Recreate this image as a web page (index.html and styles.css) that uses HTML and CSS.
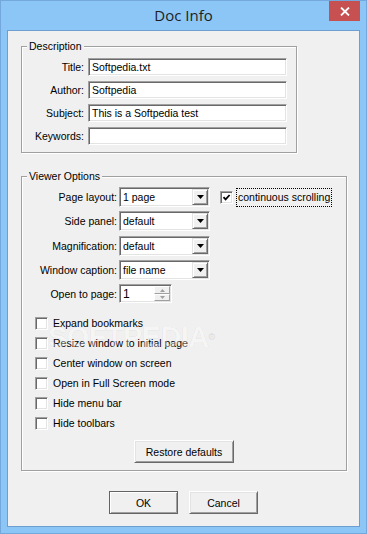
FILE: index.html
```html
<!DOCTYPE html>
<html>
<head>
<meta charset="utf-8">
<link rel="stylesheet" href="styles.css">
</head>
<body>
<div class="window">
  <div class="titlebar">
    <div></div>
    <div class="title">Doc Info</div>
    <div class="close">
      <svg width="10" height="9" viewBox="0 0 10 9"><path d="M1 0.5 L9 8.5 M9 0.5 L1 8.5" stroke="#fff" stroke-width="1.8" fill="none"/></svg>
    </div>
  </div>
  <div class="client">
    <div class="group desc">
      <div class="legend">Description</div>
      <div class="form">
        <label>Title:</label><div class="edit">Softpedia.txt</div>
        <label>Author:</label><div class="edit">Softpedia</div>
        <label>Subject:</label><div class="edit">This is a Softpedia test</div>
        <label>Keywords:</label><div class="edit"></div>
      </div>
    </div>

    <div class="group viewer">
      <div class="legend">Viewer Options</div>
      <div class="opts">
        <label>Page layout:</label>
        <div class="combo"><span class="ctext">1 page</span><span class="drop"><svg width="7" height="4" viewBox="0 0 7 4"><polygon points="0,0 7,0 3.5,4" fill="#000"/></svg></span></div>
        <div class="inline-check">
          <span class="cb"><svg width="9" height="9" viewBox="0 0 9 9"><path d="M1.5 4.2 L3.6 6.4 L7.6 2" stroke="#000" stroke-width="1.8" fill="none"/></svg></span>
          <span class="focus">continuous scrolling</span>
        </div>

        <label>Side panel:</label>
        <div class="combo"><span class="ctext">default</span><span class="drop"><svg width="7" height="4" viewBox="0 0 7 4"><polygon points="0,0 7,0 3.5,4" fill="#000"/></svg></span></div>
        <div></div>

        <label>Magnification:</label>
        <div class="combo"><span class="ctext">default</span><span class="drop"><svg width="7" height="4" viewBox="0 0 7 4"><polygon points="0,0 7,0 3.5,4" fill="#000"/></svg></span></div>
        <div></div>

        <label>Window caption:</label>
        <div class="combo"><span class="ctext">file name</span><span class="drop"><svg width="7" height="4" viewBox="0 0 7 4"><polygon points="0,0 7,0 3.5,4" fill="#000"/></svg></span></div>
        <div></div>

        <label>Open to page:</label>
        <div class="spin">
          <span class="stext">1</span>
          <span class="spin-btns">
            <span class="sbtn"><svg width="5" height="3" viewBox="0 0 5 3"><polygon points="2.5,0 5,3 0,3" fill="#a0a0a0"/></svg></span>
            <span class="sbtn"><svg width="5" height="3" viewBox="0 0 5 3"><polygon points="0,0 5,0 2.5,3" fill="#a0a0a0"/></svg></span>
          </span>
        </div>
        <div></div>
      </div>

      <div class="checks">
        <div class="check-row"><span class="cb"></span><span>Expand bookmarks</span></div>
        <div class="check-row"><span class="cb"></span><span>Resize window to initial page</span></div>
        <div class="check-row"><span class="cb"></span><span>Center window on screen</span></div>
        <div class="check-row"><span class="cb"></span><span>Open in Full Screen mode</span></div>
        <div class="check-row"><span class="cb"></span><span>Hide menu bar</span></div>
        <div class="check-row"><span class="cb"></span><span>Hide toolbars</span></div>
      </div>

      <div class="restore-row"><div class="btn restore">Restore defaults</div></div>

      <div class="watermark">SOFTPEDIA<sup>®</sup></div>
    </div>

    <div class="dlg">
      <div class="btn default">OK</div>
      <div class="btn">Cancel</div>
    </div>
  </div>
</div>
</body>
</html>
```

FILE: styles.css
```css
* { box-sizing: border-box; }
html, body { margin: 0; padding: 0; }
body {
  width: 367px;
  height: 534px;
  overflow: hidden;
  background: #8cc6f6;
  font-family: "Liberation Sans", Arial, sans-serif;
  font-size: 10.5px;
  color: #000;
}
.window {
  width: 367px;
  height: 534px;
  border: 1px solid #74a8dc;
  background: #8cc6f6;
  display: flex;
  flex-direction: column;
}
.titlebar {
  height: 29px;
  flex: none;
  display: grid;
  grid-template-columns: 1fr auto 1fr;
  padding: 0 6px;
}
.title {
  font-family: "Open Sans", "Noto Sans", sans-serif;
  font-size: 15px;
  line-height: 29px;
  color: #1e1e1e;
}
.close {
  justify-self: end;
  align-self: start;
  width: 31px;
  height: 20px;
  background: #c75050;
  display: flex;
  align-items: center;
  justify-content: center;
}
.close svg { display: block; }
.client {
  margin: 0 6px;
  height: 497px;
  flex: none;
  border: 1px solid #6c9ed0;
  background: #f0f0f0;
  padding: 15px 13px 0 13px;
}
.group {
  border: 1px solid #a0a0a0;
  box-shadow: inset 1px 1px 0 #fff, 1px 1px 0 #fff;
}
.legend {
  width: fit-content;
  margin: -7px 0 0 5px;
  padding: 0 2px;
  background: #f0f0f0;
  line-height: 13px;
  height: 13px;
}
.desc {
  width: 276px;
  padding: 0 0 7px;
}
.form {
  display: grid;
  grid-template-columns: 62px 199px;
  grid-auto-rows: 18px;
  column-gap: 4px;
  row-gap: 5px;
  margin-top: 5px;
}
.form label, .opts label {
  text-align: right;
  align-self: center;
  white-space: nowrap;
}
.edit {
  height: 18px;
  background: #fff;
  border: 1px solid;
  border-color: #a0a0a0 #fff #fff #a0a0a0;
  box-shadow: inset 1px 1px 0 #696969, inset -1px -1px 0 #e3e3e3;
  padding: 0 3px;
  line-height: 16px;
  white-space: nowrap;
}
.viewer {
  width: 326px;
  margin-top: 23px;
  padding: 0 0 7px;
  position: relative;
}
.opts {
  display: grid;
  grid-template-columns: 95px 91px auto;
  grid-template-rows: 20px 20px 20px 20px 19px;
  column-gap: 2px;
  row-gap: 4.33px;
  margin-top: 4px;
  align-items: center;
}
.combo {
  height: 20px;
  background: #fff;
  border: 1px solid;
  border-color: #a0a0a0 #fff #fff #a0a0a0;
  box-shadow: inset 1px 1px 0 #696969, inset -1px -1px 0 #e3e3e3;
  padding: 1px;
  display: flex;
  align-items: center;
}
.ctext {
  flex: 1;
  padding-left: 2px;
  white-space: nowrap;
}
.drop {
  width: 16px;
  height: 16px;
  flex: none;
  background: #f0f0f0;
  border: 1px solid;
  border-color: #e3e3e3 #696969 #696969 #e3e3e3;
  box-shadow: inset 1px 1px 0 #fff, inset -1px -1px 0 #a0a0a0;
  display: flex;
  align-items: center;
  justify-content: center;
}
.drop svg { display: block; }
.inline-check {
  margin-left: 8px;
  display: flex;
  align-items: center;
  gap: 3px;
}
.cb {
  width: 13px;
  height: 13px;
  flex: none;
  background: #fff;
  border: 1px solid;
  border-color: #a0a0a0 #fff #fff #a0a0a0;
  box-shadow: inset 1px 1px 0 #696969, inset -1px -1px 0 #e3e3e3;
  display: flex;
  align-items: center;
  justify-content: center;
}
.cb svg { display: block; }
.focus {
  border: 1px dotted #000;
  padding: 2px 1px 2px;
  line-height: 13px;
  white-space: nowrap;
}
.spin {
  width: 53px;
  height: 19px;
  background: #fff;
  border: 1px solid;
  border-color: #a0a0a0 #fff #fff #a0a0a0;
  box-shadow: inset 1px 1px 0 #696969, inset -1px -1px 0 #e3e3e3;
  padding: 1px;
  display: flex;
  align-items: center;
}
.stext {
  flex: 1;
  padding-left: 2px;
  font-size: 12px;
}
.spin-btns {
  width: 16px;
  height: 15px;
  display: flex;
  flex-direction: column;
}
.sbtn {
  flex: 1;
  background: #f0f0f0;
  border: 1px solid;
  border-color: #fff #a0a0a0 #a0a0a0 #fff;
  display: flex;
  align-items: center;
  justify-content: center;
}
.sbtn svg { display: block; }
.checks {
  margin-top: 10px;
  padding-left: 13px;
  display: flex;
  flex-direction: column;
}
.check-row {
  height: 20px;
  display: flex;
  align-items: center;
  gap: 5px;
  white-space: nowrap;
}
.restore-row {
  margin-top: 7px;
  display: flex;
  justify-content: center;
}
.btn {
  height: 23px;
  width: 69px;
  background: #f0f0f0;
  border: 1px solid;
  border-color: #fff #696969 #696969 #fff;
  box-shadow: inset 1px 1px 0 #e3e3e3, inset -1px -1px 0 #a0a0a0;
  display: flex;
  align-items: center;
  justify-content: center;
  white-space: nowrap;
}
.btn.restore { width: 100px; }
.btn.default {
  border-color: #646464;
  box-shadow: inset 1px 1px 0 #fff, inset -1px -1px 0 #a0a0a0;
}
.dlg {
  margin-top: 20px;
  display: flex;
  justify-content: center;
  gap: 11px;
}
.watermark {
  position: absolute;
  left: 26px;
  top: 146px;
  font-size: 29px;
  font-weight: bold;
  letter-spacing: -0.6px;
  color: rgba(255, 255, 255, 0.35);
  -webkit-text-stroke: 0.6px rgba(0, 0, 0, 0.07);
  pointer-events: none;
  line-height: 29px;
}
.watermark sup {
  font-size: 9px;
  vertical-align: top;
  -webkit-text-stroke: 0.4px rgba(0, 0, 0, 0.1);
}
```
